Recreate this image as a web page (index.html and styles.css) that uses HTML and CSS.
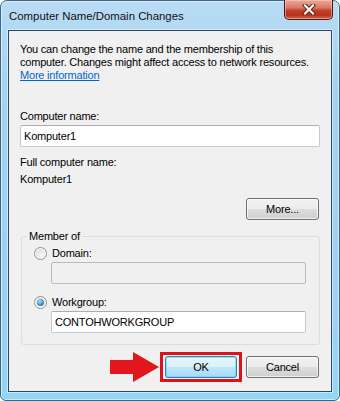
FILE: index.html
```html
<!DOCTYPE html>
<html>
<head>
<meta charset="utf-8">
<link rel="stylesheet" href="styles.css">
</head>
<body>
<div class="window">
  <div class="titlebar">
    <span class="title">Computer Name/Domain Changes</span>
    <span class="close">
      <svg width="14" height="11" viewBox="0 0 14 11">
        <path d="M3 1.5 L11 9.5 M11 1.5 L3 9.5" stroke="#5a1c14" stroke-width="4" stroke-linecap="square"/>
        <path d="M3 1.5 L11 9.5 M11 1.5 L3 9.5" stroke="#ffffff" stroke-width="2.2" stroke-linecap="square"/>
      </svg>
    </span>
  </div>
  <div class="client">
    <p class="intro">You can change the name and the membership of this<br>computer. Changes might affect access to network resources.<br><a href="#" class="link">More information</a></p>
    <div class="label first">Computer name:</div>
    <input class="field full" type="text" value="Komputer1">
    <div class="label gap">Full computer name:</div>
    <div class="label value">Komputer1</div>
    <div class="more-row"><button class="btn">More...</button></div>
    <fieldset class="group">
      <legend class="legend">Member of</legend>
      <div class="radio-row first-radio"><span class="radio"></span><span>Domain:</span></div>
      <input class="field sub" type="text" value="" disabled>
      <div class="radio-row second-radio"><span class="radio checked"></span><span>Workgroup:</span></div>
      <input class="field sub" type="text" value="CONTOHWORKGROUP">
    </fieldset>
    <div class="actions">
      <svg class="arrow" width="49" height="30" viewBox="0 0 49 30">
        <polygon points="0,8 23,8 23,0 49,15 23,30 23,22 0,22" fill="#e3161d"/>
      </svg>
      <div class="highlight"><button class="btn default">OK</button></div>
      <button class="btn">Cancel</button>
    </div>
  </div>
</div>
</body>
</html>
```
FILE: styles.css
```css
* { box-sizing: border-box; }
html, body { margin: 0; padding: 0; }
body {
  width: 340px;
  height: 401px;
  font-family: "Liberation Sans", Arial, sans-serif;
  font-size: 11px;
  letter-spacing: -0.2px;
  color: #000;
  background: #fff;
}
.window {
  width: 340px;
  height: 401px;
  display: flex;
  flex-direction: column;
  border: 1px solid #3d6585;
  border-radius: 7px 7px 6px 6px;
  background: linear-gradient(180deg, #b9dcf4 0%, #a6d2f0 20%, #9fd0f1 70%, #93d6f3 100%);
  box-shadow: inset 0 0 0 1px rgba(255,255,255,0.55);
  padding: 0 7px 8px 7px;
}
.titlebar {
  height: 29px;
  display: flex;
  justify-content: space-between;
  align-items: flex-start;
}
.title {
  margin-top: 8px;
  padding-left: 1px;
  line-height: 15px;
  font-size: 11.4px;
  letter-spacing: 0;
  color: #111;
}
.close {
  width: 49px;
  height: 20px;
  margin-top: -1px;
  margin-right: -1px;
  border: 1px solid #4c1a14;
  border-top: none;
  border-radius: 0 0 5px 5px;
  background: linear-gradient(180deg, #e9a899 0%, #d97a67 40%, #c2412c 55%, #b8301c 80%, #cf6a50 100%);
  box-shadow: inset 0 0 0 1px rgba(255,220,210,0.45);
  display: flex;
  align-items: center;
  justify-content: center;
}
.client {
  flex: 1;
  border: 1px solid #2b4862;
  background: #f0f0f0;
  box-shadow: 0 0 0 1px rgba(255,255,255,0.5);
  padding: 12px 11px 0 11px;
  display: flex;
  flex-direction: column;
}
.intro {
  margin: 0;
  line-height: 13px;
  white-space: nowrap;
}
.link { color: #0066cc; text-decoration: underline; }
.label { line-height: 13px; }
.label.first { margin-top: 28px; }
.label.gap { margin-top: 9px; }
.label.value { margin-top: 4px; }
.field {
  display: block;
  height: 22px;
  border: 1px solid #c5cbd2;
  border-top-color: #abadb3;
  border-radius: 2px;
  background: #fff;
  font-family: inherit;
  font-size: 11px;
  letter-spacing: -0.2px;
  color: #000;
  padding: 0 3px;
  margin: 2px 0 0 0;
  outline: none;
}
.field.full { width: 300px; }
.field.sub { width: 255px; margin-left: 24px; }
.field:disabled { background: #f0f0f0; border-color: #b8bcc0; }
.more-row {
  display: flex;
  justify-content: flex-end;
  margin-top: 12px;
  padding-right: 1px;
}
.btn {
  width: 73px;
  height: 22px;
  border: 1px solid #707070;
  border-radius: 3px;
  background: linear-gradient(180deg, #f2f2f2 0%, #ebebeb 48%, #dddddd 52%, #cfcfcf 100%);
  box-shadow: inset 0 0 0 1px rgba(255,255,255,0.7);
  font-family: inherit;
  font-size: 11px;
  letter-spacing: -0.2px;
  color: #000;
  padding: 0;
}
.btn.default {
  width: 72px;
  border-color: #3c7fb1;
  background: linear-gradient(180deg, #eaf6fd 0%, #d9f0fc 48%, #bee6fd 52%, #a7d9f5 100%);
  box-shadow: inset 0 0 0 1px rgba(72,216,251,0.6);
}
.group {
  margin: 10px 0 0 1px;
  width: 299px;
  border: 1px solid #d5dfe5;
  border-radius: 3px;
  padding: 0 13px 11px 5px;
  min-width: 0;
}
.legend {
  padding: 0 2px;
  line-height: 13px;
}
.radio-row {
  display: flex;
  align-items: center;
  gap: 5px;
  height: 13px;
  line-height: 13px;
  margin-left: 7px;
}
.first-radio { margin-top: 4px; }
.second-radio { margin-top: 12px; }
.radio {
  width: 13px;
  height: 13px;
  border-radius: 50%;
  border: 1px solid #8f8f8f;
  background: radial-gradient(circle at 60% 65%, #f6f6f6 0%, #e4e4e4 50%, #cfcfcf 100%);
  box-shadow: inset 0 0 0 1px #ffffff;
  position: relative;
}
.radio.checked::after {
  content: "";
  position: absolute;
  left: 2px;
  top: 2px;
  width: 7px;
  height: 7px;
  border-radius: 50%;
  background: radial-gradient(circle at 40% 35%, #a9e4fc 0%, #3d8fd0 55%, #1b4f80 100%);
}
.actions {
  display: flex;
  justify-content: flex-end;
  align-items: center;
  margin-top: 7px;
  padding-right: 1px;
}
.arrow { display: block; margin-right: 1px; }
.highlight {
  border: 3px solid #d9141c;
  padding: 1px 2px 1px 2px;
  margin-right: 4px;
  display: flex;
}
```
